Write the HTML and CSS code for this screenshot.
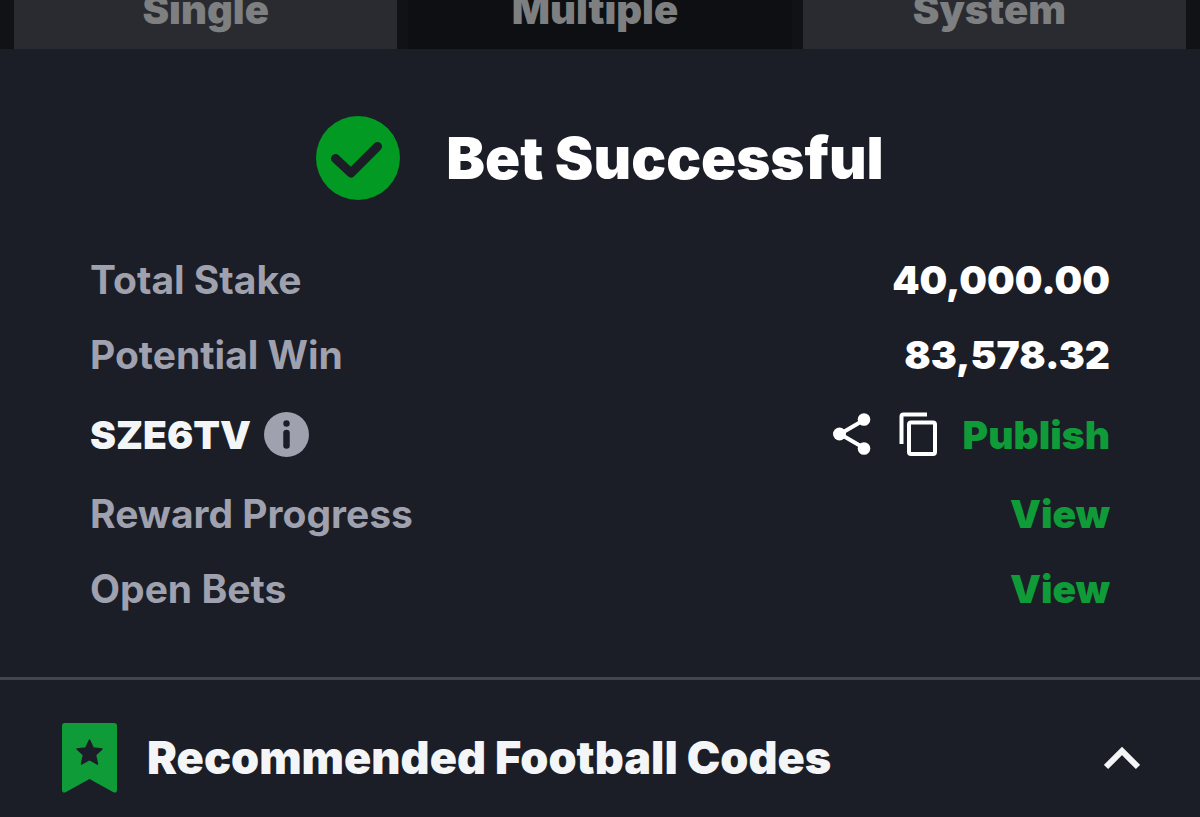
FILE: index.html
```html
<!DOCTYPE html>
<html lang="en">

<head>
    <meta charset="UTF-8">
    <meta name="viewport" content="width=device-width, initial-scale=1.0">
    <title>Bet Successful</title>
    <link rel="stylesheet" href="styles.css">
</head>

<body>

    <nav class="tabs">
        <button type="button" class="tab">Single</button>
        <button type="button" class="tab active">Multiple</button>
        <button type="button" class="tab">System</button>
    </nav>

    <main>
        <div class="heading">
            <svg class="check-icon" viewBox="0 0 84 84" aria-hidden="true">
                <circle cx="42" cy="42" r="42" fill="#029a22" />
                <path d="M19.500 42.500L35 57L61.500 30.500" fill="none" stroke="#1b1e26" stroke-width="9" stroke-linecap="round" stroke-linejoin="round" />
            </svg>
            <h1>Bet Successful</h1>
        </div>

        <div class="details">
            <div class="row">
                <span class="label">Total Stake</span>
                <span class="value">40,000.00</span>
            </div>
            <div class="row">
                <span class="label">Potential Win</span>
                <span class="value">83,578.32</span>
            </div>
            <div class="row code-row">
                <div class="code">
                    <span class="value">SZE6TV</span>
                    <button type="button" class="icon-btn" aria-label="Code info">
                        <svg class="info-icon" viewBox="0 0 45 45">
                            <circle cx="22.500" cy="22.500" r="22.500" fill="#9fa1af" />
                            <circle cx="22.500" cy="11.500" r="3.200" fill="#1b1e26" />
                            <path d="M22.500 21V33.500" stroke="#1b1e26" stroke-width="6.500" stroke-linecap="round" />
                        </svg>
                    </button>
                </div>
                <div class="actions">
                    <button type="button" class="icon-btn" aria-label="Share">
                        <svg class="share-icon" viewBox="0 0 38 44">
                            <path d="M31 8L7 22L31 36" fill="none" stroke="#fff" stroke-width="4" />
                            <circle cx="31" cy="7.500" r="6.300" fill="#fff" />
                            <circle cx="6.500" cy="22" r="6.500" fill="#fff" />
                            <circle cx="31" cy="36.500" r="6.300" fill="#fff" />
                        </svg>
                    </button>
                    <button type="button" class="icon-btn" aria-label="Copy">
                        <svg class="copy-icon" viewBox="0 0 38 44" fill="none" stroke="#fff" stroke-width="4">
                            <path d="M28 2.500H4.500Q2.500 2.500 2.500 4.500V32" />
                            <rect x="10" y="10.500" width="26" height="31.500" rx="2" />
                        </svg>
                    </button>
                    <a href="#" class="link">Publish</a>
                </div>
            </div>
            <div class="row">
                <span class="label">Reward Progress</span>
                <a href="#" class="link">View</a>
            </div>
            <div class="row">
                <span class="label">Open Bets</span>
                <a href="#" class="link">View</a>
            </div>
        </div>
    </main>

    <section class="codes">
        <svg class="bookmark-icon" viewBox="0 0 55 70" aria-hidden="true">
            <path d="M3 0H52Q55 0 55 3V66.500Q55 71 51 69L27.500 56L4 69Q0 71 0 66.500V3Q0 0 3 0Z" fill="#0f9b38" />
            <path d="M27.500 17L31.200 25L40 26L33.500 32L35.500 41L27.500 36.600L19.500 41L21.500 32L15 26L23.800 25Z" fill="#1b1e26" stroke="#1b1e26" stroke-width="1.500" stroke-linejoin="round" />
        </svg>
        <h2>Recommended Football Codes</h2>
        <button type="button" class="icon-btn" aria-label="Collapse">
            <svg class="chevron-icon" viewBox="0 0 36 24">
                <path d="M2 21L18 5L34 21" fill="none" stroke="#f4f5f7" stroke-width="6" />
            </svg>
        </button>
    </section>

</body>

</html>
```
FILE: styles.css
```css
* {
    box-sizing: border-box;
}

body {
    font-family: Inter, "Liberation Sans", sans-serif;
    margin: 0;
    background-color: #1b1e26;
    color: #ffffff;
}

button {
    font-family: inherit;
    border: none;
    cursor: pointer;
}

/* the tab bar is cut off by the top of the screen */
.tabs {
    display: grid;
    grid-template-columns: repeat(3, 1fr);
    align-items: end;
    align-content: end;
    gap: 11px;
    height: 49px;
    padding: 0 14px;
    overflow: hidden;
    background-color: #111216;
}

.tab {
    height: 79px;
    padding: 0;
    background-color: #2a2b30;
    color: #7e7f80;
    font-size: 40px;
    font-weight: 900;
}

.tab + .tab {
    padding-right: 10px;
}

.tab.active {
    background-color: #0e0f12;
}

.heading {
    display: flex;
    align-items: center;
    justify-content: center;
    gap: 46px;
    padding: 67px 0 42px;
}

.heading h1 {
    margin: 0;
    font-size: 58px;
    line-height: 84px;
    font-weight: 900;
}

.check-icon {
    width: 84px;
    height: 84px;
}

.details {
    padding: 0 90px 51px;
    font-size: 39px;
}

.row {
    display: flex;
    align-items: center;
    justify-content: space-between;
    height: 75px;
}

.code-row {
    height: 84px;
}

.label {
    color: #9fa1af;
    font-weight: 700;
}

.value {
    font-weight: 900;
}

.link {
    color: #0f9b38;
    font-weight: 900;
    text-decoration: none;
}

.code,
.actions {
    display: flex;
    align-items: center;
}

.code {
    gap: 13px;
    color: #f4f5f7;
}

.icon-btn {
    display: flex;
    padding: 0;
    background: none;
}

.info-icon {
    width: 45px;
    height: 45px;
}

.share-icon,
.copy-icon {
    width: 38px;
    height: 44px;
}

.actions .icon-btn {
    margin-right: 28px;
}

.actions .icon-btn + .icon-btn {
    margin-right: 26px;
}

.codes {
    display: flex;
    align-items: center;
    padding: 43px 60px 24px 62px;
    border-top: 3px solid #424450;
    color: #f4f5f7;
}

.codes h2 {
    flex: 1;
    margin: 0 0 0 30px;
    font-size: 45px;
    line-height: 70px;
    font-weight: 900;
}

.bookmark-icon {
    width: 55px;
    height: 70px;
}

.chevron-icon {
    width: 36px;
    height: 24px;
}
```
